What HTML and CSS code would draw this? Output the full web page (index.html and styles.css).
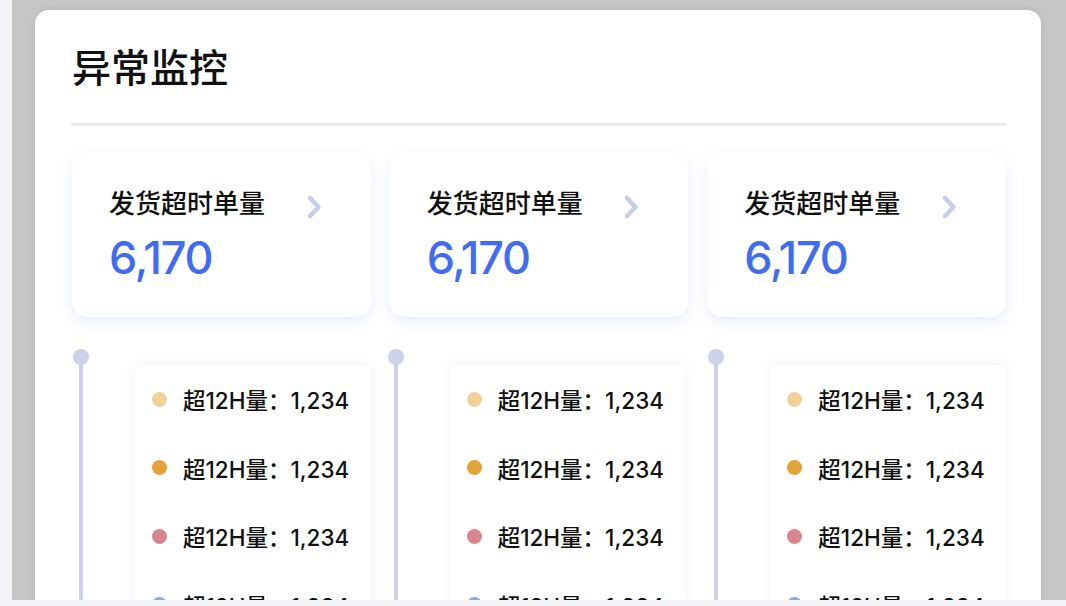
FILE: index.html
```html
<!DOCTYPE html>
<html lang="zh-CN">
<head>
    <meta charset="UTF-8">
    <meta name="viewport" content="width=device-width, initial-scale=1.0">
    <title>异常监控</title>
    <link rel="stylesheet" href="styles.css">
</head>
<body>
    <div class="frame">
        <div class="panel">
            <h1 class="panel-title">异常监控</h1>
            <div class="divider"></div>

            <div class="columns">
                <div class="column">
                    <div class="stat-card">
                        <div class="stat-head">
                            <span class="stat-label">发货超时单量</span>
                            <svg class="chevron" width="15" height="24" viewBox="0 0 15 24"><path d="M3 3 L11.5 12 L3 21" fill="none" stroke="#c8cde8" stroke-width="4.5" stroke-linecap="round" stroke-linejoin="round"/></svg>
                        </div>
                        <div class="stat-value">6,170</div>
                    </div>
                    <div class="track">
                        <div class="rail"><span class="rail-dot"></span><span class="rail-bar"></span></div>
                        <ul class="detail">
                            <li><span class="dot dot-light"></span>超12H量：1,234</li>
                            <li><span class="dot dot-orange"></span>超12H量：1,234</li>
                            <li><span class="dot dot-pink"></span>超12H量：1,234</li>
                            <li><span class="dot dot-blue"></span>超12H量：1,234</li>
                        </ul>
                    </div>
                </div>

                <div class="column">
                    <div class="stat-card">
                        <div class="stat-head">
                            <span class="stat-label">发货超时单量</span>
                            <svg class="chevron" width="15" height="24" viewBox="0 0 15 24"><path d="M3 3 L11.5 12 L3 21" fill="none" stroke="#c8cde8" stroke-width="4.5" stroke-linecap="round" stroke-linejoin="round"/></svg>
                        </div>
                        <div class="stat-value">6,170</div>
                    </div>
                    <div class="track track-mid">
                        <div class="rail"><span class="rail-dot"></span><span class="rail-bar"></span></div>
                        <ul class="detail">
                            <li><span class="dot dot-light"></span>超12H量：1,234</li>
                            <li><span class="dot dot-orange"></span>超12H量：1,234</li>
                            <li><span class="dot dot-pink"></span>超12H量：1,234</li>
                            <li><span class="dot dot-blue"></span>超12H量：1,234</li>
                        </ul>
                    </div>
                </div>

                <div class="column">
                    <div class="stat-card">
                        <div class="stat-head">
                            <span class="stat-label">发货超时单量</span>
                            <svg class="chevron" width="15" height="24" viewBox="0 0 15 24"><path d="M3 3 L11.5 12 L3 21" fill="none" stroke="#c8cde8" stroke-width="4.5" stroke-linecap="round" stroke-linejoin="round"/></svg>
                        </div>
                        <div class="stat-value">6,170</div>
                    </div>
                    <div class="track">
                        <div class="rail"><span class="rail-dot"></span><span class="rail-bar"></span></div>
                        <ul class="detail">
                            <li><span class="dot dot-light"></span>超12H量：1,234</li>
                            <li><span class="dot dot-orange"></span>超12H量：1,234</li>
                            <li><span class="dot dot-pink"></span>超12H量：1,234</li>
                            <li><span class="dot dot-blue"></span>超12H量：1,234</li>
                        </ul>
                    </div>
                </div>
            </div>
        </div>
    </div>
</body>
</html>
```

FILE: styles.css
```css
* {
    margin: 0;
    padding: 0;
    box-sizing: border-box;
}

body {
    background-color: #f3f4f8;
    font-family: "Inter", "Noto Sans CJK SC", sans-serif;
    color: #111;
    height: 606px;
    overflow: hidden;
}

.frame {
    margin-left: 12px;
    height: 600px;
    background-color: #c6c6c6;
    padding: 10px 25px 0 23px;
    overflow: hidden;
}

.panel {
    background-color: #fff;
    border-radius: 14px 14px 0 0;
    box-shadow: 0 0 8px rgba(0, 0, 0, 0.08);
    padding: 33px 35px 0 37px;
    height: 640px;
}

.panel-title {
    font-size: 39px;
    line-height: 50px;
    font-weight: 500;
    color: #111;
}

.divider {
    height: 3px;
    background-color: #e8eaf4;
    margin: 30px 0 0 -1px;
}

.columns {
    display: grid;
    grid-template-columns: repeat(3, 1fr);
    column-gap: 19px;
    margin-top: 26px;
}

.stat-card {
    height: 165px;
    background-color: #fff;
    border-radius: 16px;
    box-shadow: 0 5px 14px rgba(70, 110, 235, 0.13);
    padding: 34px 49px 0 37px;
}

.stat-head {
    display: flex;
    justify-content: space-between;
    align-items: center;
}

.stat-label {
    font-size: 26px;
    line-height: 36px;
    font-weight: 500;
}

.chevron {
    margin-top: 6px;
}

.stat-value {
    font-size: 45px;
    line-height: 56px;
    font-weight: 500;
    color: #3f6cf3;
    margin-top: 8px;
    letter-spacing: -1.2px;
}

.track {
    display: flex;
    margin-top: 32px;
    gap: 46px;
}

.track-mid {
    margin-left: -3px;
    margin-right: 3px;
}

.rail {
    width: 16px;
    margin-left: 1px;
    display: flex;
    flex-direction: column;
    align-items: center;
    flex-shrink: 0;
}

.rail-dot {
    width: 16px;
    height: 16px;
    border-radius: 50%;
    background-color: #cdd2ea;
}

.rail-bar {
    width: 4px;
    height: 300px;
    margin-top: -2px;
    background-color: #cdd2ea;
}

.detail {
    flex: 1;
    list-style: none;
    margin-top: 16px;
    background-color: #fff;
    border-radius: 8px;
    box-shadow: 0 0 12px rgba(90, 120, 240, 0.1);
    padding: 0 0 0 17px;
    height: 300px;
}

.detail li {
    display: flex;
    align-items: center;
    height: 68.5px;
    font-size: 22.5px;
    font-weight: 500;
    color: #111;
}

.dot {
    width: 15px;
    height: 15px;
    border-radius: 50%;
    margin-right: 16px;
    flex-shrink: 0;
}

.dot-light { background-color: #f1d197; }
.dot-orange { background-color: #e5a237; }
.dot-pink { background-color: #d8868d; }
.dot-blue { background-color: #8fa6ee; }
```
